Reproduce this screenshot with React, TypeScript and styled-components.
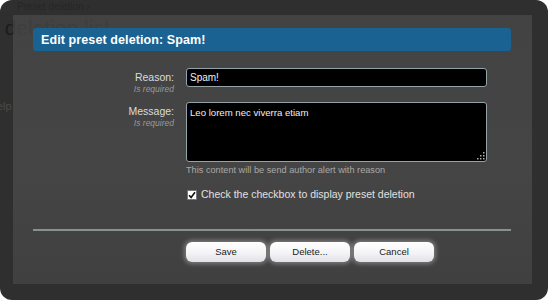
import React from "react";
import styled, { createGlobalStyle } from "styled-components";

const GlobalStyle = createGlobalStyle`
  html, body {
    margin: 0;
    padding: 0;
    background: #ffffff;
  }
  body {
    font-family: "Liberation Sans", Arial, sans-serif;
  }
`;

const Frame = styled.div`
  position: relative;
  width: 548px;
  height: 300px;
  box-sizing: border-box;
  border-radius: 12px;
  background: #2f2f2f;
  overflow: hidden;
`;

// the page that lies under the overlay, dimmed
const BackdropPage = styled.div`
  display: flex;
  flex-direction: column;
  padding: 1px 0 0 17px;
  color: #262626;
`;

const Breadcrumb = styled.div`
  font-size: 10px;
  line-height: 12px;
`;

const PageTitle = styled.h1`
  margin: 3px 0 0 -24px;
  font-size: 21px;
  font-weight: normal;
  line-height: 24px;
  color: #1c1c1c;
  white-space: nowrap;
`;

const SideText = styled.div`
  margin: 60px 0 0 -20px;
  font-size: 11px;
  color: #4a4a4a;
`;

const Overlay = styled.div`
  position: absolute;
  left: 13px;
  top: 15px;
  width: 519px;
  height: 269px;
  box-sizing: border-box;
  padding: 13px 21px 0 20px;
  background: linear-gradient(
    180deg,
    rgba(78, 78, 78, 0.62) 0%,
    rgba(70, 70, 70, 0.9) 12%,
    rgba(70, 70, 70, 0.94) 60%,
    rgba(65, 65, 65, 0.95) 100%
  );
  display: flex;
  flex-direction: column;
`;

const TitleBar = styled.h2`
  margin: 0;
  height: 23px;
  box-sizing: border-box;
  padding: 0 8px;
  border-radius: 3px;
  background: #1a6292;
  color: #ffffff;
  font-size: 12.5px;
  font-weight: bold;
  line-height: 24px;
  letter-spacing: 0.1px;
`;

const Form = styled.div`
  display: flex;
  flex-direction: column;
  margin-top: 17px;
`;

const Row = styled.div<{ $gap?: number }>`
  display: grid;
  grid-template-columns: 141px 301px;
  column-gap: 12px;
  margin-top: ${(p) => p.$gap ?? 0}px;
`;

const LabelCell = styled.div`
  text-align: right;
  padding-top: 3px;
`;

const Label = styled.div`
  color: #dcdcdc;
  font-size: 10.5px;
  line-height: 13px;
`;

const Required = styled.div`
  color: #9a9a9a;
  font-size: 8.5px;
  font-style: italic;
  line-height: 10px;
`;

const TextInput = styled.div`
  height: 19px;
  box-sizing: border-box;
  border: 1px solid #93a3a8;
  border-radius: 3px;
  background: #000;
  color: #f0f0f0;
  font-size: 10px;
  line-height: 17px;
  padding: 0 3px;
`;

const TextArea = styled.div`
  position: relative;
  height: 60px;
  box-sizing: border-box;
  border: 1px solid #93a3a8;
  border-radius: 3px;
  background: #000;
  color: #f0f0f0;
  font-size: 9.6px;
  line-height: 13px;
  padding: 3px 3px;
`;

const Grip = styled.svg`
  position: absolute;
  right: 1px;
  bottom: 1px;
`;

const Hint = styled.div`
  margin-top: 2px;
  color: #a8a8a8;
  font-size: 9.2px;
  line-height: 12px;
`;

const CheckRow = styled.label`
  display: flex;
  align-items: center;
  gap: 4px;
  margin-top: 12px;
  padding-left: 1px;
  color: #e0e0e0;
  font-size: 10.5px;
  line-height: 13px;
`;

const CheckBox = styled.span`
  width: 10px;
  height: 10px;
  box-sizing: border-box;
  background: #ffffff;
  border: 1px solid #777;
  display: inline-flex;
  align-items: center;
  justify-content: center;
`;

const Separator = styled.div`
  height: 2px;
  background: #86928d;
  margin-top: 28px;
`;

const ButtonBar = styled.div`
  display: flex;
  gap: 4px;
  margin-top: 11px;
  padding-left: 153px;
`;

const Button = styled.button`
  width: 80px;
  height: 20px;
  box-sizing: border-box;
  border: none;
  border-radius: 6px;
  background: linear-gradient(180deg, #ffffff 0%, #f4f4f6 55%, #e0e0e8 100%);
  box-shadow: 0 0 4px 2px rgba(255, 255, 255, 0.3);
  color: #222;
  font-family: "Liberation Sans", Arial, sans-serif;
  font-size: 9.5px;
  line-height: 20px;
  padding: 0;
  cursor: pointer;
`;

export default function App(): JSX.Element {
  return (
    <>
      <GlobalStyle />
      <Frame>
        <BackdropPage>
          <Breadcrumb>Preset deletion ›</Breadcrumb>
          <PageTitle>t deletion list</PageTitle>
          <SideText>elp</SideText>
        </BackdropPage>
        <Overlay>
          <TitleBar>Edit preset deletion: Spam!</TitleBar>
          <Form>
            <Row>
              <LabelCell>
                <Label>Reason:</Label>
                <Required>Is required</Required>
              </LabelCell>
              <TextInput>Spam!</TextInput>
            </Row>
            <Row $gap={8}>
              <LabelCell>
                <Label>Message:</Label>
                <Required>Is required</Required>
              </LabelCell>
              <div>
                <TextArea>
                  Leo lorem nec viverra etiam
                  <Grip width="8" height="8" viewBox="0 0 8 8">
                    <rect x="6" y="0" width="1.5" height="1.5" fill="#aaa" />
                    <rect x="3" y="3" width="1.5" height="1.5" fill="#aaa" />
                    <rect x="6" y="3" width="1.5" height="1.5" fill="#aaa" />
                    <rect x="0" y="6" width="1.5" height="1.5" fill="#aaa" />
                    <rect x="3" y="6" width="1.5" height="1.5" fill="#aaa" />
                    <rect x="6" y="6" width="1.5" height="1.5" fill="#aaa" />
                  </Grip>
                </TextArea>
                <Hint>This content will be send author alert with reason</Hint>
                <CheckRow>
                  <CheckBox>
                    <svg width="8" height="8" viewBox="0 0 8 8">
                      <path d="M1 4.2 L3.1 6.4 L7 1.2" stroke="#111" strokeWidth="1.6" fill="none" />
                    </svg>
                  </CheckBox>
                  Check the checkbox to display preset deletion
                </CheckRow>
              </div>
            </Row>
          </Form>
          <Separator />
          <ButtonBar>
            <Button>Save</Button>
            <Button>Delete...</Button>
            <Button>Cancel</Button>
          </ButtonBar>
        </Overlay>
      </Frame>
    </>
  );
}
